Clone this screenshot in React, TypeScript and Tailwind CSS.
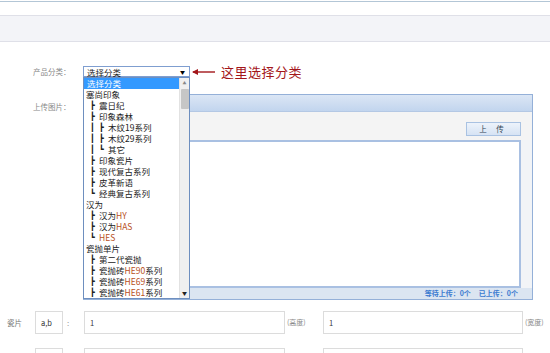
import React from "react";

const FONT = { fontFamily: '"Noto Sans CJK SC", "Noto Sans", sans-serif' };

// 下拉列表里的分类（树状前缀 + 名称）
const ITEMS: { pre: string[]; text: string }[] = [
  { pre: [], text: "塞尚印象" },
  { pre: ["┣"], text: "震日纪" },
  { pre: ["┣"], text: "印象森林" },
  { pre: ["┃", "┣"], text: "木纹19系列" },
  { pre: ["┃", "┣"], text: "木纹29系列" },
  { pre: ["┃", "┗"], text: "其它" },
  { pre: ["┣"], text: "印象瓷片" },
  { pre: ["┣"], text: "现代复古系列" },
  { pre: ["┣"], text: "皮革新语" },
  { pre: ["┗"], text: "经典复古系列" },
  { pre: [], text: "汉为" },
  { pre: ["┣"], text: "汉为HY" },
  { pre: ["┣"], text: "汉为HAS" },
  { pre: ["┗"], text: "HES" },
  { pre: [], text: "瓷抛单片" },
  { pre: ["┣"], text: "第二代瓷抛" },
  { pre: ["┣"], text: "瓷抛砖HE90系列" },
  { pre: ["┣"], text: "瓷抛砖HE69系列" },
  { pre: ["┣"], text: "瓷抛砖HE61系列" },
];

function ItemText({ text }: { text: string }) {
  const parts = text.split(/(H[A-Z]+\d*)/);
  return (
    <>
      {parts.map((p, i) =>
        /^H[A-Z]+\d*$/.test(p) ? (
          <span key={i} className="text-[#b8501c]">{p}</span>
        ) : (
          <span key={i}>{p}</span>
        )
      )}
    </>
  );
}

function Dropdown() {
  return (
    <div className="absolute left-0 top-full z-10 flex h-[222px] w-[107px] border border-[#6e8fbf] bg-white">
      <div className="flex-1 overflow-hidden">
        <div className="h-[11px] bg-[#3399ff] pl-[3px] text-[8.5px] leading-[11px] text-white">选择分类</div>
        {ITEMS.map((it, i) => (
          <div
            key={i}
            className={`flex h-[11px] items-center text-[8.5px] leading-[11px] text-[#222] ${it.pre.length ? "pl-[6px]" : "pl-[2px]"}`}
          >
            {it.pre.map((c, j) => (
              <span key={j} className="w-[9px] shrink-0 text-[8px] font-black" style={{ fontFamily: '"DejaVu Sans", sans-serif' }}>
                {c}
              </span>
            ))}
            <span className="whitespace-nowrap">
              <ItemText text={it.text} />
            </span>
          </div>
        ))}
      </div>
      <div className="flex w-[10px] flex-col items-center border-l border-[#e2e2e2] bg-[#f0f0f0]">
        <span className="mt-[3px] text-[4px] leading-[5px] text-[#888]">▲</span>
        <div className="mt-[3px] h-[20px] w-[8px] rounded-[1px] bg-[#c6c6c6]" />
        <div className="flex-1" />
        <span className="mb-[3px] text-[5px] leading-[5px] text-[#222]">▼</span>
      </div>
    </div>
  );
}

function Input({ w, value }: { w: string; value?: string }) {
  return (
    <div className={`${w} flex h-[23px] items-center border border-[#dcdcdc] bg-white pl-[5px] text-[7.5px] text-[#333]`}>
      {value}
    </div>
  );
}

export default function App() {
  return (
    <div className="h-[353px] w-[550px] overflow-hidden bg-white" style={FONT}>
      {/* 顶部条 */}
      <div className="h-[15px] pt-px">
        <div className="h-px bg-[#b3c6d6]" />
      </div>
      <div className="h-[27px] border-y border-[#dfe0e8] bg-[#f3f4f8]" />

      {/* 产品分类 */}
      <div className="mt-[24px] flex h-[11px] items-center">
        <div className="w-[83px] pl-[33px] text-[7.5px] text-[#888]">产品分类：</div>
        <div className="relative">
          <div className="flex h-[11px] w-[107px] items-center justify-between border border-[#7f9ed0] bg-white pl-[3px] pr-[4px] text-[8.5px] leading-[10px] text-[#222]">
            <span>选择分类</span>
            <span className="text-[5px] text-black">▼</span>
          </div>
          <Dropdown />
        </div>
        <div className="ml-[2px] flex items-center">
          <svg width="24" height="8" viewBox="0 0 24 8">
            <path d="M1 4 L23 4" stroke="#a3161a" strokeWidth="1.4" />
            <path d="M0 4 L6 1 L6 7 Z" fill="#a3161a" />
          </svg>
          <span className="ml-[5px] text-[13px] leading-none tracking-[0.5px] text-[#a3161a]">这里选择分类</span>
        </div>
      </div>

      {/* 上传图片 */}
      <div className="mt-[17px] flex">
        <div className="w-[83px] pl-[33px] pt-[7px] text-[7.5px] text-[#888]">上传图片：</div>
        <div className="w-[450px] border border-[#94b0d8] bg-[#f2f4f7]">
          <div className="h-[17px] border-b border-[#b4c8e4] bg-gradient-to-b from-[#dbe6f5] to-[#c2d5ee]" />
          <div className="flex h-[28px] justify-end bg-[#f4f4f4] pr-[11px] pt-[10px]">
            <div className="flex h-[14px] w-[55px] items-center justify-center border border-[#a9c2e2] bg-gradient-to-b from-[#edf3fb] to-[#d6e3f4] text-[7.5px] tracking-[4px] text-[#345]">
              上 传
            </div>
          </div>
          <div className="mx-[11px] h-[148px] border-2 border-[#a9c0e2] bg-white" />
          <div className="flex h-[11px] items-center justify-end bg-[#dbe5f1] pr-[14px] text-[7px] font-bold leading-none text-[#3b7bd0]">
            <span>等待上传：0个</span>
            <span className="ml-[8px]">已上传：0个</span>
          </div>
        </div>
      </div>

      {/* 瓷片尺寸 */}
      <div className="mt-[11px] flex items-center">
        <div className="w-[35px] pl-[7px] text-[7.5px] text-[#777]">瓷片</div>
        <Input w="w-[28px]" value="a,b" />
        <div className="w-[21px] pl-[4px] text-[8px] text-[#999]">:</div>
        <Input w="w-[201px]" value="1" />
        <div className="w-[38px] pl-[2px] text-[7px] text-[#888]">(高度)</div>
        <Input w="w-[200px]" value="1" />
        <div className="pl-[2px] text-[7px] text-[#888]">(宽度)</div>
      </div>
      <div className="mt-[14px] flex items-center">
        <div className="w-[35px]" />
        <Input w="w-[28px]" />
        <div className="w-[21px]" />
        <Input w="w-[201px]" />
        <div className="w-[38px]" />
        <Input w="w-[200px]" />
      </div>
    </div>
  );
}
